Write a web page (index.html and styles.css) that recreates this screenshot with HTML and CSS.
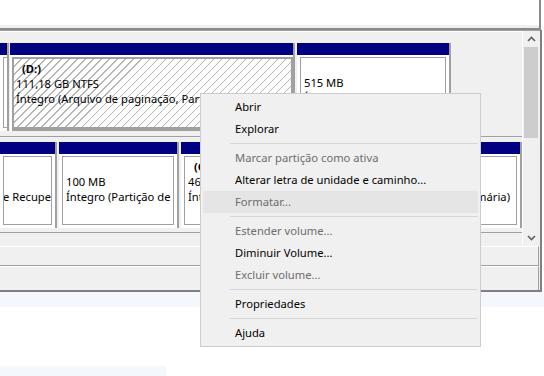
FILE: index.html
```html
<!DOCTYPE html>
<html>
<head>
<meta charset="utf-8">
<link rel="stylesheet" href="styles.css">
</head>
<body>
<div class="screen">
  <div class="toplist"></div>
  <div class="panel">
    <div class="diskarea">
      <div class="disks">
        <div class="diskrow row1">
          <div class="cell c-left"><div class="hdr"></div><div class="body"></div></div>
          <div class="cell c-d sel"><div class="hdr"></div><div class="body">
            <div class="ln name">(D:)</div>
            <div class="ln">111,18 GB NTFS</div>
            <div class="ln">Íntegro (Arquivo de paginação, Partição Primária)</div>
          </div></div>
          <div class="cell c-515"><div class="hdr"></div><div class="body">
            <div class="ln name"></div>
            <div class="ln">515 MB</div>
            <div class="ln">Íntegro (Partição de Recuperação)</div>
          </div></div>
        </div>
        <div class="diskrow row2">
          <div class="cell c-rec"><div class="hdr"></div><div class="body">
            <div class="ln name"></div>
            <div class="ln"></div>
            <div class="ln endr"><span>Íntegro (Partição de Recupe</span></div>
          </div></div>
          <div class="cell c-100"><div class="hdr"></div><div class="body">
            <div class="ln name"></div>
            <div class="ln">100 MB</div>
            <div class="ln">Íntegro (Partição de Sistema EFI)</div>
          </div></div>
          <div class="cell c-c"><div class="hdr"></div><div class="body">
            <div class="ln name">(C:)</div>
            <div class="ln">465,16 GB NTFS</div>
            <div class="ln">Íntegro (Inicialização, Partição Primária)</div>
          </div></div>
          <div class="cell c-last"><div class="hdr"></div><div class="body">
            <div class="ln name"></div>
            <div class="ln"></div>
            <div class="ln endr"><span>Íntegro (Partição Primária)</span></div>
          </div></div>
        </div>
      </div>
      <div class="vscroll">
        <div class="arrow"><svg width="9" height="6" viewBox="0 0 9 6"><path d="M1 5 L4.5 1.5 L8 5" fill="none" stroke="#606060" stroke-width="1.6"/></svg></div>
        <div class="thumb"></div>
        <div class="track"></div>
        <div class="arrow"><svg width="9" height="6" viewBox="0 0 9 6"><path d="M1 1 L4.5 4.5 L8 1" fill="none" stroke="#606060" stroke-width="1.6"/></svg></div>
      </div>
    </div>
    <div class="legend">
      <div class="lbar"></div>
      <div class="lbar second"></div>
    </div>
  </div>
  <div class="strip"></div>
  <div class="foot"></div>

  <div class="menu">
    <div class="mi">Abrir</div>
    <div class="mi">Explorar</div>
    <div class="sep"></div>
    <div class="mi dis">Marcar partição como ativa</div>
    <div class="mi">Alterar letra de unidade e caminho...</div>
    <div class="mi dis hot">Formatar...</div>
    <div class="sep"></div>
    <div class="mi dis">Estender volume...</div>
    <div class="mi">Diminuir Volume...</div>
    <div class="mi dis">Excluir volume...</div>
    <div class="sep"></div>
    <div class="mi">Propriedades</div>
    <div class="sep"></div>
    <div class="mi">Ajuda</div>
  </div>
</div>
</body>
</html>
```

FILE: styles.css
```css
* { box-sizing: border-box; }
html, body { margin: 0; padding: 0; background: #fff; }
body { font-family: "Noto Sans", "Open Sans", sans-serif; font-size: 11.2px; color: #000; }
.screen { position: relative; width: 544px; height: 376px; overflow: hidden; }

.toplist {
  height: 30px;
  width: 541px;
  background: #fff;
  border-bottom: 2px solid #8a8a8a;
  border-right: 2px solid #8a8a8a;
  box-shadow: inset 0 -3px 0 #f0f0f0;
}

.panel {
  width: 542px;
  background: #f0f0f0;
  border-right: 2px solid #808080;
  border-bottom: 2px solid #808080;
}
.diskarea { display: flex; height: 216px; border-top: 1px solid #a0a0a0; }
.disks { width: 522px; overflow: hidden; padding-top: 11px; border-top: 1px solid #fff; }

.diskrow { display: flex; border-bottom: 1px solid #a0a0a0; padding-bottom: 5px; margin-bottom: 5px; height: 94px; }
.row2 { height: 91px; margin-bottom: 0; padding-bottom: 4px; }

.cell { display: flex; flex-direction: column; background: #fff; border-right: 2px solid #a0a0a0; margin-right: 2px; flex: none; }
.hdr { height: 12px; background: #000080; flex: none; }
.body { flex: 1; margin: 2px 3px 3px 3px; border: 1px solid #a0a0a0; padding: 2px 0 0 3px; overflow: hidden; white-space: nowrap; }
.ln { height: 15px; line-height: 15px; }
.ln.name { font-weight: bold; padding-left: 6px; }
.sel .body {
  margin: 2px 0 0 2px;
  border: 2px solid #a0a0a0;
  border-bottom-width: 4px;
  padding-left: 2px;
  background: repeating-linear-gradient(135deg, #fff 0, #fff 4.9px, #b4b4b4 4.9px, #b4b4b4 5.66px);
}
.sel .ln.name { padding-left: 6px; }

.c-left { width: 9px; margin-right: 1px; }
.c-d { width: 285px; }
.c-515 { width: 154px; }
.c-rec { width: 57px; }
.c-100 { width: 120px; }
.c-c { width: 262px; }
.c-last { width: 77px; margin-right: 0; }
.endr { display: flex; justify-content: flex-end; }
.c-rec .endr { padding-right: 0; }
.c-last .endr { padding-right: 6px; }

.vscroll { width: 17px; flex: none; display: flex; flex-direction: column; border-left: 1px solid #fff; }
.arrow { height: 16px; display: flex; align-items: center; justify-content: center; }
.thumb { height: 91px; background: #cdcdcd; margin: 0 1px; }
.track { flex: 1; }

.lbar { height: 20px; border-top: 1px solid #fff; border-bottom: 1px solid #a0a0a0; border-right: 1px solid #a0a0a0; width: 539px; }
.lbar.second { height: 24px; border-bottom: none; }

.strip { height: 15px; width: 544px; background: #f4f8fc; }
.foot { position: absolute; left: 0; top: 366px; width: 166px; height: 10px; background: #f4f8fc; }

.menu {
  position: absolute; left: 200px; top: 93px; width: 281px; height: 254px;
  background: #f0f0f0; border: 1px solid #cccccc; padding: 2px;
}
.mi { height: 22px; line-height: 22px; padding-left: 32px; white-space: nowrap; }
.mi.dis { color: #6d6d6d; }
.mi.hot { background: #e5e5e5; }
.sep { height: 7px; padding: 3px 0 0 27px; }
.sep::before { content: ""; display: block; height: 1px; background: #d7d7d7; }
```
